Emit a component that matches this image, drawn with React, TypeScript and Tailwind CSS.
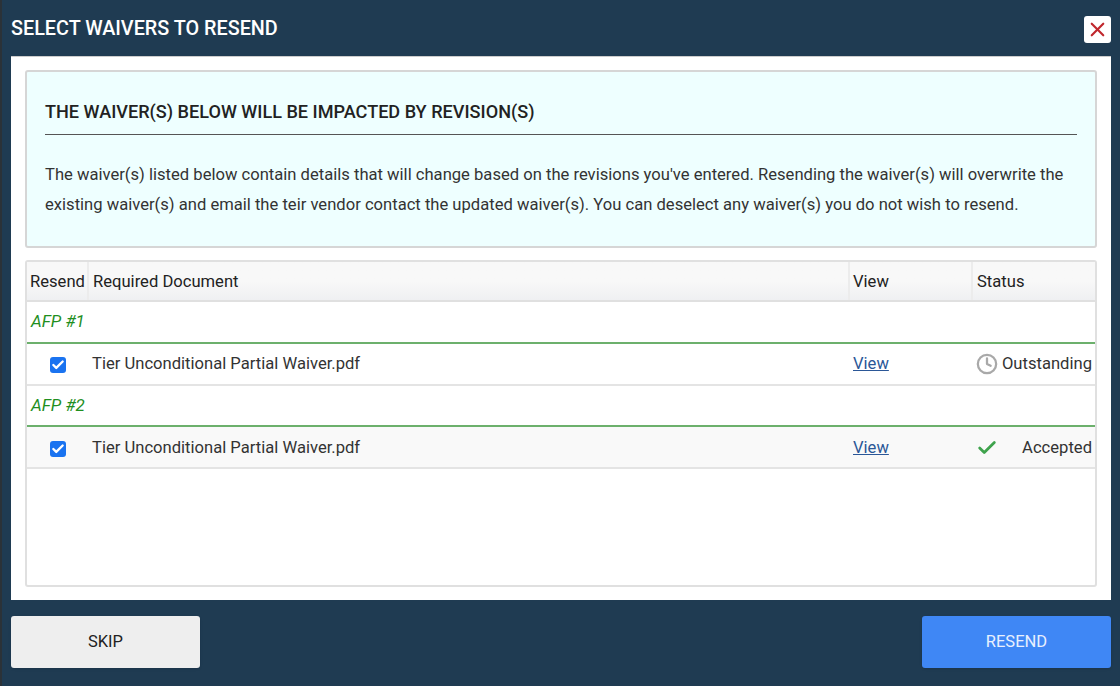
import { Check, Clock, X } from 'lucide-react'

const columns = 'grid grid-cols-[62px_761px_123px_1fr]'

function AfpGroup({ label, striped, status }: { label: string; striped?: boolean; status: 'outstanding' | 'accepted' }) {
  return (
    <div>
      <div className="h-[41.5px] flex items-center pl-[4px] border-b-2 border-[#6cb06c] italic text-[17px] text-[#1f8f1f]">{label}</div>
      <div className={`${columns} h-[42px] pt-[2px] items-center border-b-2 border-[#e4e4e4] text-[16.6px] text-[#333] ${striped ? 'bg-[#f9f9f9]' : 'bg-white'}`}>
        <div className="flex justify-center">
          <span className="w-4 h-4 mt-[1px] rounded-[3px] bg-[#1a73f0] flex items-center justify-center">
            <Check size={14} strokeWidth={4} className="text-white" />
          </span>
        </div>
        <div className="pl-[3px]">Tier Unconditional Partial Waiver.pdf</div>
        <div className="pl-[3px]">
          <a href="#" className="underline text-[#2b5797]">View</a>
        </div>
        <div className="flex items-center justify-between pl-[3px] pr-[3px]">
          {status === 'outstanding' ? (
            <Clock size={22} strokeWidth={2.5} className="text-[#a9a9a9]" />
          ) : (
            <Check size={22} strokeWidth={3} className="text-[#3fa34d]" />
          )}
          <span>{status === 'outstanding' ? 'Outstanding' : 'Accepted'}</span>
        </div>
      </div>
    </div>
  )
}

export default function App() {
  return (
    <div className="w-[1120px] h-[686px] bg-[#1f3b52] pl-[9px] pr-[9px] flex flex-col font-['Roboto',sans-serif] overflow-hidden border-l-2 border-l-[#2b3238] box-border">
      {/* Header */}
      <div className="h-[56px] flex items-center justify-between shrink-0">
        <h1 className="text-[19.8px] font-medium text-white pt-[1px]">SELECT WAIVERS TO RESEND</h1>
        <button className="w-[27px] h-[27px] bg-white rounded-[3px] flex items-center justify-center mt-[2px]">
          <X size={23} strokeWidth={2.25} className="text-[#c0272d]" />
        </button>
      </div>

      {/* Body */}
      <div className="h-[544px] bg-white px-[14px] pt-[13px] flex flex-col gap-[12px] shrink-0 border-t border-[#ccc]">
        <div className="h-[178px] bg-[#eeffff] border-2 border-[#d6d6d6] rounded-[3px] px-[18px] pt-[28px]">
          <h2 className="text-[18.1px] font-medium text-[#222] pb-[10px] border-b border-[#555] leading-[24px]">
            THE WAIVER(S) BELOW WILL BE IMPACTED BY REVISION(S)
          </h2>
          <p className="mt-[25px] text-[16.6px] leading-[30px] text-[#333]">
            The waiver(s) listed below contain details that will change based on the revisions you've entered. Resending the waiver(s) will overwrite the existing waiver(s) and email the teir vendor contact the updated waiver(s). You can deselect any waiver(s) you do not wish to resend.
          </p>
        </div>

        <div className="h-[327px] border-2 border-[#e0e0e0] rounded-[3px] overflow-hidden">
          <div className={`${columns} h-[40px] items-center border-b-2 border-[#e0e0e0] bg-gradient-to-b from-[#f8f8f8] from-50% to-[#eff0f2] to-100% text-[16.6px] text-[#222]`}>
            <div className="h-full flex items-center pl-[3px] pt-[2px] border-r-2 border-[#ececec]">Resend</div>
            <div className="h-full flex items-center pl-[4px] pt-[2px] border-r-2 border-[#ececec]">Required Document</div>
            <div className="h-full flex items-center pl-[3px] pt-[2px] border-r-2 border-[#ececec]">View</div>
            <div className="h-full flex items-center pl-[4px] pt-[2px]">Status</div>
          </div>
          <AfpGroup label="AFP #1" status="outstanding" />
          <AfpGroup label="AFP #2" striped status="accepted" />
        </div>
      </div>

      {/* Footer */}
      <div className="flex justify-between pt-[16px]">
        <button className="w-[189px] h-[52px] rounded-[3px] bg-[#eeeeee] text-[16.5px] text-[#222] shadow-sm">SKIP</button>
        <button className="w-[189px] h-[52px] rounded-[3px] bg-[#3f87f5] text-[16.5px] text-[#e8f0fe] shadow-sm">RESEND</button>
      </div>
    </div>
  )
}
